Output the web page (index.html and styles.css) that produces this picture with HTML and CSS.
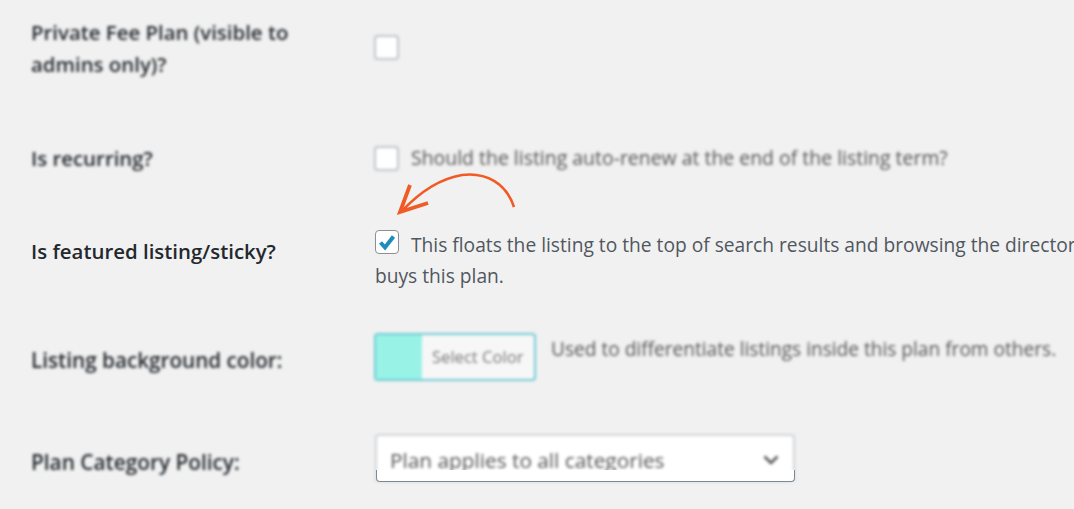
FILE: index.html
```html
<!DOCTYPE html>
<html lang="en">
<head>
    <meta charset="UTF-8">
    <title>Fee Plan Settings</title>
    <link rel="stylesheet" href="styles.css">
</head>
<body>
    <div class="form">
        <div class="row row-private blurred">
            <div class="label">Private Fee Plan (visible to admins only)?</div>
            <div class="field"><span class="checkbox checkbox-private"></span></div>
        </div>

        <div class="row row-recurring blurred">
            <div class="label">Is recurring?</div>
            <div class="field inline">
                <span class="checkbox"></span>
                <span class="hint hint-recurring">Should the listing auto-renew at the end of the listing term?</span>
            </div>
        </div>

        <div class="row row-featured">
            <div class="label label-featured">Is featured listing/sticky?</div>
            <div class="field field-featured">
                <p class="featured-text"><span class="checkbox checkbox-on"><svg viewBox="0 0 24 24" width="24" height="24"><path d="M5.5 12.5 L10 17.5 L18.5 6.5" fill="none" stroke="#1e8cbe" stroke-width="4"/></svg></span>This floats the listing to the top of search results and browsing the directory when a user buys this plan.</p>
            </div>
        </div>

        <div class="row row-color blurred">
            <div class="label label-color">Listing background color:</div>
            <div class="field inline inline-color">
                <div class="color-button">
                    <span class="swatch"></span>
                    <span class="color-text">Select Color</span>
                </div>
                <span class="hint hint-color">Used to differentiate listings inside this plan from others.</span>
            </div>
        </div>

        <div class="row row-policy">
            <div class="label label-policy blurred">Plan Category Policy:</div>
            <div class="field">
                <div class="select-wrap">
                    <div class="select blurred">
                        <span>Plan applies to all categories</span>
                        <svg viewBox="0 0 16 10" width="16" height="10"><path d="M1.5 1.5 L8 8 L14.5 1.5" fill="none" stroke="#555" stroke-width="2.6"/></svg>
                    </div>
                    <div class="select-edge"></div>
                </div>
            </div>
        </div>
    </div>

    <svg class="arrow" viewBox="0 0 1074 509" width="1074" height="509">
        <path d="M514 207 C506 183 486 172 462 175 C438 179 417 195 402 211" fill="none" stroke="#f15a24" stroke-width="2.6"/>
        <path d="M410 185 L400 212 L428 203" fill="none" stroke="#f15a24" stroke-width="3.8"/>
    </svg>
</body>
</html>
```

FILE: styles.css
```css
:root {
    --page-color: #f1f1f1;
    --text-color: #444;
    --label-color: #23282d;
}
html, body {
    height: 100%;
    overflow: hidden;
}
body {
    margin: 0;
    position: relative;
    background-color: var(--page-color);
    color: var(--text-color);
    font-family: 'Open Sans', sans-serif;
    font-size: 20.4px;
    line-height: 32px;
}
.form {
    padding: 16px 0 0 31px;
    width: 1100px;
}
.row {
    display: grid;
    grid-template-columns: 344px 1fr;
}
.row-private { height: 126px; }
.row-recurring { height: 70px; }
.row-featured { height: 120px; }
.row-color { height: 100px; }
.blurred {
    filter: blur(1.4px);
}
.label {
    width: 300px;
    font-weight: 600;
    color: var(--label-color);
}
.label-featured {
    padding-top: 23px;
}
.label-color {
    padding-top: 12px;
    font-size: 20.7px;
}
.label-policy {
    padding-top: 14px;
    font-size: 20.8px;
}
.field {
    min-width: 0;
}
.inline {
    display: flex;
    align-items: center;
    gap: 12px;
    height: 32px;
}
.checkbox {
    display: inline-block;
    box-sizing: border-box;
    flex: none;
    width: 25px;
    height: 25px;
    margin-left: -1px;
    background-color: #fff;
    border: 2px solid #bfc3c8;
    border-radius: 4px;
}
.checkbox-private {
    margin-top: 19px;
}
.checkbox-on {
    width: 24px;
    height: 24px;
    margin-left: 0;
    border: 1px solid #8c8f94;
    margin-right: 12px;
    vertical-align: -2px;
}
.checkbox-on svg {
    display: block;
    margin: -1px;
}
.hint {
    color: #555;
    white-space: nowrap;
    font-size: 19.1px;
}
.hint-recurring {
    font-size: 19.45px;
}
.hint-color {
    margin-top: 1px;
}
.field-featured {
    padding-top: 17px;
}
.featured-text {
    margin: 0;
    width: 840px;
    font-size: 19.2px;
    line-height: 31px;
    color: #50575e;
}
.inline-color {
    align-items: flex-start;
    gap: 15px;
    height: 48px;
}
.color-button {
    display: flex;
    box-sizing: border-box;
    width: 162px;
    height: 48px;
    margin-left: -1px;
    background-color: #f7f7f7;
    border: 2px solid #6fcbd6;
    border-radius: 4px;
    margin-top: 1px;
}
.swatch {
    width: 46px;
    background-color: #98f2e6;
}
.color-text {
    font-size: 16.6px;
    color: #777;
    padding: 6px 0 0 10px;
    white-space: nowrap;
}
.select-wrap {
    position: relative;
    width: 420px;
    margin-top: 2px;
}
.select {
    display: flex;
    align-items: center;
    justify-content: space-between;
    box-sizing: border-box;
    height: 48px;
    padding: 4px 14px 0 13px;
    background-color: #fff;
    border: 2px solid #cfd2d6;
    border-radius: 4px;
    color: #555;
    font-size: 20.8px;
}
.select-edge {
    position: absolute;
    left: 1px;
    right: 0;
    top: 36px;
    height: 12px;
    box-sizing: border-box;
    background-color: #fff;
    border: 1px solid #7e8993;
    border-top: 0;
    border-radius: 0 0 4px 4px;
}
.arrow {
    position: absolute;
    left: 0;
    top: 0;
}
```
